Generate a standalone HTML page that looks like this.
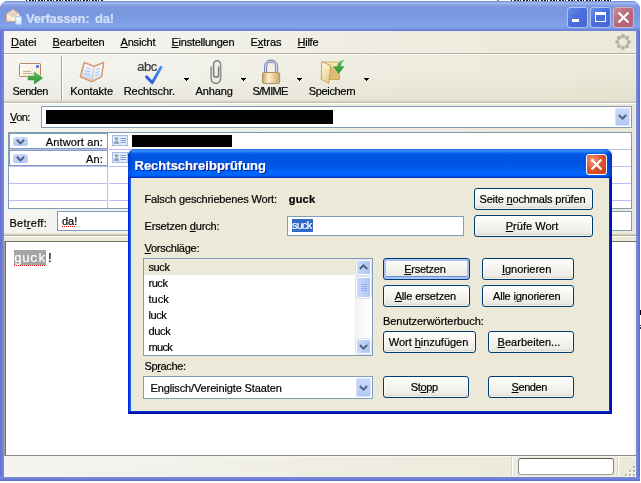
<!DOCTYPE html><html><head><meta charset="utf-8"><title>Verfassen: da!</title><style>
html,body{margin:0;padding:0;background:#fff;}
body{width:641px;height:483px;position:relative;overflow:hidden;font-family:"Liberation Sans",sans-serif;}
.t{position:absolute;white-space:nowrap;font-family:"Liberation Sans",sans-serif;-webkit-text-stroke:0.2px currentColor;}
u{text-decoration:underline;text-underline-offset:1px;text-decoration-thickness:1px;}
div{box-sizing:border-box;}
#root{position:absolute;left:0;top:0;width:641px;height:483px;will-change:transform;}
.btn{position:absolute;border:1px solid #003C74;border-radius:3px;background:linear-gradient(to bottom,#FFFFFF 0%,#F6F5F0 40%,#ECEBE5 85%,#D6D0C5 100%);box-shadow:inset 0 0 0 1px rgba(255,255,255,0.6);}
.btn.def{box-shadow:inset 0 0 0 2px #A9C4F0, inset 0 -2px 0 1px #6A8FE0;}
svg{position:absolute;overflow:visible;}
</style></head><body><div id="root">
<div style="position:absolute;left:26px;top:0px;width:1px;height:1px;background:#1a1a1a;"></div>
<div style="position:absolute;left:29px;top:0px;width:2px;height:1px;background:#1a1a1a;"></div>
<div style="position:absolute;left:32px;top:0px;width:2px;height:1px;background:#1a1a1a;"></div>
<div style="position:absolute;left:35px;top:0px;width:1px;height:1px;background:#1a1a1a;"></div>
<div style="position:absolute;left:38px;top:0px;width:2px;height:1px;background:#1a1a1a;"></div>
<div style="position:absolute;left:41px;top:0px;width:2px;height:1px;background:#1a1a1a;"></div>
<div style="position:absolute;left:44px;top:0px;width:1px;height:1px;background:#1a1a1a;"></div>
<div style="position:absolute;left:47px;top:0px;width:2px;height:1px;background:#1a1a1a;"></div>
<div style="position:absolute;left:50px;top:0px;width:2px;height:1px;background:#1a1a1a;"></div>
<div style="position:absolute;left:53px;top:0px;width:1px;height:1px;background:#1a1a1a;"></div>
<div style="position:absolute;left:56px;top:0px;width:2px;height:1px;background:#1a1a1a;"></div>
<div style="position:absolute;left:59px;top:0px;width:2px;height:1px;background:#1a1a1a;"></div>
<div style="position:absolute;left:62px;top:0px;width:1px;height:1px;background:#1a1a1a;"></div>
<div style="position:absolute;left:65px;top:0px;width:2px;height:1px;background:#1a1a1a;"></div>
<div style="position:absolute;left:68px;top:0px;width:2px;height:1px;background:#1a1a1a;"></div>
<div style="position:absolute;left:71px;top:0px;width:1px;height:1px;background:#1a1a1a;"></div>
<div style="position:absolute;left:74px;top:0px;width:2px;height:1px;background:#1a1a1a;"></div>
<div style="position:absolute;left:77px;top:0px;width:2px;height:1px;background:#1a1a1a;"></div>
<div style="position:absolute;left:80px;top:0px;width:1px;height:1px;background:#1a1a1a;"></div>
<div style="position:absolute;left:83px;top:0px;width:2px;height:1px;background:#1a1a1a;"></div>
<div style="position:absolute;left:86px;top:0px;width:2px;height:1px;background:#1a1a1a;"></div>
<div style="position:absolute;left:89px;top:0px;width:1px;height:1px;background:#1a1a1a;"></div>
<div style="position:absolute;left:92px;top:0px;width:2px;height:1px;background:#1a1a1a;"></div>
<div style="position:absolute;left:95px;top:0px;width:2px;height:1px;background:#1a1a1a;"></div>
<div style="position:absolute;left:98px;top:0px;width:1px;height:1px;background:#1a1a1a;"></div>
<div style="position:absolute;left:101px;top:0px;width:2px;height:1px;background:#1a1a1a;"></div>
<div style="position:absolute;left:497px;top:0px;width:2px;height:1px;background:#888;"></div>
<div style="position:absolute;left:511px;top:0px;width:1px;height:1px;background:#1a1a1a;"></div>
<div style="position:absolute;left:514px;top:0px;width:2px;height:1px;background:#1a1a1a;"></div>
<div style="position:absolute;left:517px;top:0px;width:2px;height:1px;background:#1a1a1a;"></div>
<div style="position:absolute;left:520px;top:0px;width:1px;height:1px;background:#1a1a1a;"></div>
<div style="position:absolute;left:523px;top:0px;width:2px;height:1px;background:#1a1a1a;"></div>
<div style="position:absolute;left:526px;top:0px;width:2px;height:1px;background:#1a1a1a;"></div>
<div style="position:absolute;left:529px;top:0px;width:1px;height:1px;background:#1a1a1a;"></div>
<div style="position:absolute;left:532px;top:0px;width:2px;height:1px;background:#1a1a1a;"></div>
<div style="position:absolute;left:535px;top:0px;width:2px;height:1px;background:#1a1a1a;"></div>
<div style="position:absolute;left:538px;top:0px;width:1px;height:1px;background:#1a1a1a;"></div>
<div style="position:absolute;left:541px;top:0px;width:2px;height:1px;background:#1a1a1a;"></div>
<div style="position:absolute;left:544px;top:0px;width:2px;height:1px;background:#1a1a1a;"></div>
<div style="position:absolute;left:547px;top:0px;width:1px;height:1px;background:#1a1a1a;"></div>
<div style="position:absolute;left:550px;top:0px;width:2px;height:1px;background:#1a1a1a;"></div>
<div style="position:absolute;left:553px;top:0px;width:2px;height:1px;background:#1a1a1a;"></div>
<div style="position:absolute;left:556px;top:0px;width:1px;height:1px;background:#1a1a1a;"></div>
<div style="position:absolute;left:559px;top:0px;width:2px;height:1px;background:#1a1a1a;"></div>
<div style="position:absolute;left:562px;top:0px;width:2px;height:1px;background:#1a1a1a;"></div>
<div style="position:absolute;left:565px;top:0px;width:1px;height:1px;background:#1a1a1a;"></div>
<div style="position:absolute;left:568px;top:0px;width:2px;height:1px;background:#1a1a1a;"></div>
<div style="position:absolute;left:571px;top:0px;width:2px;height:1px;background:#1a1a1a;"></div>
<div style="position:absolute;left:574px;top:0px;width:1px;height:1px;background:#1a1a1a;"></div>
<div style="position:absolute;left:577px;top:0px;width:2px;height:1px;background:#1a1a1a;"></div>
<div style="position:absolute;left:580px;top:0px;width:2px;height:1px;background:#1a1a1a;"></div>
<div style="position:absolute;left:583px;top:0px;width:1px;height:1px;background:#1a1a1a;"></div>
<div style="position:absolute;left:586px;top:0px;width:2px;height:1px;background:#1a1a1a;"></div>
<div style="position:absolute;left:589px;top:0px;width:2px;height:1px;background:#1a1a1a;"></div>
<div style="position:absolute;left:592px;top:0px;width:1px;height:1px;background:#1a1a1a;"></div>
<div style="position:absolute;left:595px;top:0px;width:2px;height:1px;background:#1a1a1a;"></div>
<div style="position:absolute;left:598px;top:0px;width:2px;height:1px;background:#1a1a1a;"></div>
<div style="position:absolute;left:601px;top:0px;width:1px;height:1px;background:#1a1a1a;"></div>
<div style="position:absolute;left:604px;top:0px;width:2px;height:1px;background:#1a1a1a;"></div>
<div style="position:absolute;left:607px;top:0px;width:2px;height:1px;background:#1a1a1a;"></div>
<div style="position:absolute;left:610px;top:0px;width:1px;height:1px;background:#1a1a1a;"></div>
<div style="position:absolute;left:0px;top:1px;width:640px;height:480px;border-radius:8px 8px 0 0;background:#6B7BD6;"></div>
<div style="position:absolute;left:0px;top:1px;width:640px;height:30px;border-radius:8px 8px 0 0;background:linear-gradient(to bottom,#5C7FD9 0,#92ACE8 1px,#9EB7EA 2.5px,#8AA3E4 4px,#7C97DF 6px,#7996DF 12px,#7C9CE4 19px,#80A5E9 25px,#7D9DE6 27px,#738DDF 28px,#6C82D9 29px,#6C82D9 30px);"></div>
<div style="position:absolute;left:0px;top:31px;width:4px;height:449px;background:linear-gradient(to right,#6470D2 0,#6876D4 1px,#7686DC 3px,#7B8DE0 4px);"></div>
<div style="position:absolute;left:636px;top:31px;width:4px;height:449px;background:linear-gradient(to right,#7B8DE0 0,#7686DC 1px,#6876D4 3px,#5E68CC 4px);"></div>
<div style="position:absolute;left:0px;top:477px;width:640px;height:4px;background:linear-gradient(to bottom,#7B8DE0 0,#7484DB 1px,#6876D4 3px,#5E68CC 4px);"></div>
<div style="position:absolute;left:4px;top:31px;width:632px;height:446px;background:#ECE9D8;"></div>
<svg style="left:6px;top:9px" width="16" height="16" viewBox="0 0 16 16">
<defs><linearGradient id="pg" x1="0" y1="0" x2="0" y2="1"><stop offset="0" stop-color="#FFFFFF"/><stop offset="1" stop-color="#D5E3F8"/></linearGradient></defs>
<path d="M0.6 5 L6.9 0.4 L13.6 5 L13.6 12.3 L0.6 12.3 Z" fill="#FFF7EA" stroke="#DDA673" stroke-width="1" stroke-linejoin="round"/>
<path d="M1.6 5.3 L6.9 1.6 L12.6 5.3 L7 8.6 Z" fill="#E3D2C3"/>
<path d="M1.4 11.6 L5.6 8 M12.8 11.6 L8.4 8" stroke="#E6C3A0" stroke-width="0.9"/>
<rect x="9.7" y="7.7" width="5.8" height="7.6" fill="url(#pg)" stroke="#A6C3EE" stroke-width="1"/>
</svg>
<div class="t" style="left:26.00px;top:10.50px;font-size:13px;line-height:16px;color:#D4E0F7;font-weight:bold;letter-spacing:-0.251px;">Verfassen:</div>
<div class="t" style="left:95.00px;top:10.50px;font-size:13px;line-height:16px;color:#D4E0F7;font-weight:bold;letter-spacing:-0.250px;">da!</div>
<div style="position:absolute;left:567px;top:7px;width:21px;height:21px;border:1px solid #B3C3F0;border-radius:3px;background:linear-gradient(135deg,#6A8CE8 0,#4A6FDC 45%,#4468D6 100%);"></div>
<div style="position:absolute;left:572px;top:19px;width:7px;height:3px;background:#fff;"></div>
<div style="position:absolute;left:590px;top:7px;width:21px;height:21px;border:1px solid #B3C3F0;border-radius:3px;background:linear-gradient(135deg,#6A8CE8 0,#4A6FDC 45%,#4468D6 100%);"></div>
<div style="position:absolute;left:595px;top:12px;width:11px;height:10px;border:1px solid #fff;border-top:3px solid #fff;"></div>
<div style="position:absolute;left:613px;top:7px;width:21px;height:21px;border:1px solid #D3B4C6;border-radius:3px;background:linear-gradient(135deg,#C98A98 0,#B9687A 50%,#B0607A 100%);"></div>
<svg style="left:613px;top:7px" width="21" height="21" viewBox="0 0 21 21"><path d="M5.5 5.5 L15.5 15.5 M15.5 5.5 L5.5 15.5" stroke="#fff" stroke-width="2.2" stroke-linecap="butt"/></svg>
<div style="position:absolute;left:4px;top:31px;width:632px;height:22px;background:linear-gradient(to right,#F4F4F1 0,#F2F1EA 30%,#EEECDF 65%,#ECE9D8 100%);"></div>
<div style="position:absolute;left:4px;top:53px;width:632px;height:1px;background:#B3AF9C;"></div>
<div style="position:absolute;left:4px;top:54px;width:632px;height:1px;background:#FFFFFF;"></div>
<div style="position:absolute;left:4px;top:55px;width:632px;height:47px;background:linear-gradient(to right,#F4F4F1 0,#F2F1EA 30%,#EEECDF 65%,#ECE9D8 100%);"></div>
<div style="position:absolute;left:4px;top:54px;width:632px;height:46px;background:linear-gradient(to bottom,rgba(120,110,60,0) 0,rgba(120,110,60,0) 40%,rgba(120,110,60,0.07) 100%);"></div>
<div style="position:absolute;left:4px;top:100px;width:632px;height:1px;background:#E2DFD2;"></div>
<div style="position:absolute;left:4px;top:101px;width:632px;height:1px;background:#D6D3C3;"></div>
<div style="position:absolute;left:4px;top:102px;width:632px;height:1px;background:#C5C1AD;"></div>
<div style="position:absolute;left:4px;top:103px;width:632px;height:1px;background:#FFFFFF;"></div>
<div style="position:absolute;left:4px;top:104px;width:632px;height:131px;background:linear-gradient(to right,#F4F4F1 0,#F2F1EA 30%,#EEECDF 65%,#ECE9D8 100%);"></div>
<div class="t" style="left:11.00px;top:35.19px;font-size:11px;line-height:14px;color:#000;letter-spacing:-0.045px;"><u>D</u>atei</div>
<div class="t" style="left:52.50px;top:35.19px;font-size:11px;line-height:14px;color:#000;letter-spacing:-0.134px;"><u>B</u>earbeiten</div>
<div class="t" style="left:120.50px;top:35.19px;font-size:11px;line-height:14px;color:#000;letter-spacing:-0.179px;"><u>A</u>nsicht</div>
<div class="t" style="left:171.50px;top:35.19px;font-size:11px;line-height:14px;color:#000;letter-spacing:-0.254px;"><u>E</u>instellungen</div>
<div class="t" style="left:250.50px;top:35.19px;font-size:11px;line-height:14px;color:#000;letter-spacing:-0.035px;">E<u>x</u>tras</div>
<div class="t" style="left:297.50px;top:35.19px;font-size:11px;line-height:14px;color:#000;letter-spacing:-0.251px;"><u>H</u>ilfe</div>
<svg style="left:614px;top:33px" width="18" height="18" viewBox="0 0 18 18"><circle cx="14.80" cy="9.00" r="2.1" fill="#B4B2A8"/><circle cx="13.10" cy="13.10" r="2.1" fill="#B4B2A8"/><circle cx="9.00" cy="14.80" r="2.1" fill="#B4B2A8"/><circle cx="4.90" cy="13.10" r="2.1" fill="#B4B2A8"/><circle cx="3.20" cy="9.00" r="2.1" fill="#B4B2A8"/><circle cx="4.90" cy="4.90" r="2.1" fill="#B4B2A8"/><circle cx="9.00" cy="3.20" r="2.1" fill="#B4B2A8"/><circle cx="13.10" cy="4.90" r="2.1" fill="#B4B2A8"/></svg>
<div class="t" style="left:12.50px;top:83.59px;font-size:11px;line-height:14px;color:#000;letter-spacing:-0.405px;">Senden</div>
<div class="t" style="left:70.30px;top:83.59px;font-size:11px;line-height:14px;color:#000;letter-spacing:-0.103px;">Kontakte</div>
<div class="t" style="left:123.75px;top:83.59px;font-size:11px;line-height:14px;color:#000;letter-spacing:-0.079px;">Rechtschr.</div>
<div class="t" style="left:195.60px;top:83.59px;font-size:11px;line-height:14px;color:#000;letter-spacing:-0.145px;">Anhang</div>
<div class="t" style="left:252.50px;top:83.59px;font-size:11px;line-height:14px;color:#000;letter-spacing:-0.643px;">S/MIME</div>
<div class="t" style="left:308.75px;top:83.59px;font-size:11px;line-height:14px;color:#000;letter-spacing:-0.335px;">Speichern</div>
<div style="position:absolute;left:61px;top:56px;width:1px;height:45px;background:#ACA899;"></div>
<div style="position:absolute;left:62px;top:56px;width:1px;height:45px;background:#FFFFFF;"></div>
<div style="position:absolute;left:184px;top:78px;width:5px;height:1px;background:#000;"></div>
<div style="position:absolute;left:185px;top:79px;width:3px;height:1px;background:#000;"></div>
<div style="position:absolute;left:186px;top:80px;width:1px;height:1px;background:#000;"></div>
<div style="position:absolute;left:241px;top:78px;width:5px;height:1px;background:#000;"></div>
<div style="position:absolute;left:242px;top:79px;width:3px;height:1px;background:#000;"></div>
<div style="position:absolute;left:243px;top:80px;width:1px;height:1px;background:#000;"></div>
<div style="position:absolute;left:297px;top:78px;width:5px;height:1px;background:#000;"></div>
<div style="position:absolute;left:298px;top:79px;width:3px;height:1px;background:#000;"></div>
<div style="position:absolute;left:299px;top:80px;width:1px;height:1px;background:#000;"></div>
<div style="position:absolute;left:364px;top:78px;width:5px;height:1px;background:#000;"></div>
<div style="position:absolute;left:365px;top:79px;width:3px;height:1px;background:#000;"></div>
<div style="position:absolute;left:366px;top:80px;width:1px;height:1px;background:#000;"></div>
<svg style="left:0;top:54px" width="641" height="50" viewBox="0 54 641 50">
<defs>
<linearGradient id="env" x1="0" y1="0" x2="1" y2="1"><stop offset="0" stop-color="#FFFFFF"/><stop offset="1" stop-color="#F3E2CB"/></linearGradient>
<linearGradient id="grn" x1="0" y1="0" x2="0" y2="1"><stop offset="0" stop-color="#63C05E"/><stop offset="1" stop-color="#2E8F2E"/></linearGradient>
<linearGradient id="pgL" x1="0" y1="0" x2="0" y2="1"><stop offset="0" stop-color="#FFFFFF"/><stop offset="1" stop-color="#BFD8F8"/></linearGradient>
<linearGradient id="pgR" x1="0" y1="0" x2="0" y2="1"><stop offset="0" stop-color="#FFFFFF"/><stop offset="1" stop-color="#D6E6FB"/></linearGradient>
<linearGradient id="chk" x1="0" y1="1" x2="1" y2="0"><stop offset="0" stop-color="#2B55D8"/><stop offset="1" stop-color="#4A96F4"/></linearGradient>
<linearGradient id="gold" x1="0" y1="0" x2="1" y2="0"><stop offset="0" stop-color="#C6A36A"/><stop offset="0.35" stop-color="#FBF0CF"/><stop offset="0.7" stop-color="#E2C995"/><stop offset="1" stop-color="#C9A66C"/></linearGradient>
<linearGradient id="fold" x1="0" y1="0" x2="0.6" y2="1"><stop offset="0" stop-color="#FFFCEE"/><stop offset="1" stop-color="#EBCD88"/></linearGradient><linearGradient id="foldb" x1="0" y1="0" x2="0" y2="1"><stop offset="0" stop-color="#F6E7B4"/><stop offset="1" stop-color="#E2C47C"/></linearGradient>
</defs>
<!-- send -->
<rect x="19.5" y="63.5" width="21" height="13" rx="0.8" fill="url(#env)" stroke="#B8865F" stroke-width="1"/>
<rect x="36" y="65" width="3" height="3" fill="#5C80F0"/>
<path d="M23 71.5 H31 M23 73.5 H33" stroke="#C8B29A" stroke-width="1"/>
<path d="M28 76 H34.3 V72 L42.8 78 L34.3 84 V80 H28 Z" fill="url(#grn)" stroke="#FFFFFF" stroke-width="1.2" paint-order="stroke"/>
<path d="M28 76 H34.3 V72 L42.8 78 L34.3 84 V80 H28 Z" fill="none" stroke="#2F8C2F" stroke-width="0.5"/>
<!-- contacts book -->
<path d="M84 62.2 L94.2 66.1 L103.9 62.2 L101.8 76.8 L91.8 81.9 L80 77 Z" fill="#E9B58C" stroke="#D2946A" stroke-width="1" stroke-linejoin="round"/>
<path d="M85 63.8 L93.6 67.3 L92 80.2 L81.8 76 Z" fill="url(#pgL)"/>
<path d="M94.6 67.3 L102.6 63.9 L100.8 75.9 L92.6 80.2 Z" fill="url(#pgR)"/>
<path d="M86 67.5 L90.5 69 M85.2 70.5 L90 72 M84.5 73.5 L89.5 75 M95.5 70 L100 68.3 M95.2 73 L99.6 71.3 M94.8 76 L99.2 74.3" stroke="#A4C2EE" stroke-width="1"/>
<!-- abc check -->
<path d="M146.6 76.9 L152.3 82.6 L161 67.2" fill="none" stroke="url(#chk)" stroke-width="2.9" stroke-linecap="round" stroke-linejoin="round"/>
<!-- paperclip -->
<path d="M211.2 67 V78.6 A4.7 4.7 0 0 0 220.6 78.6 V64.2 A3.5 3.5 0 0 0 213.6 64.2 V74.8 A2.5 2.5 0 0 0 218.6 74.8 V67" fill="none" stroke="#7C7C7C" stroke-width="1.5" stroke-linecap="round"/>
<path d="M211.9 67 V78.6 A4 4 0 0 0 219.9 78.6 V64.2" fill="none" stroke="#D0D0D0" stroke-width="0.6"/>
<!-- lock -->
<path d="M265.6 72.5 V66.8 A5.5 5.6 0 0 1 276.6 66.8 V72.5" fill="none" stroke="#7D86B4" stroke-width="3.2"/>
<path d="M265.6 72.5 V66.8 A5.5 5.6 0 0 1 276.6 66.8 V72.5" fill="none" stroke="#D5DCF4" stroke-width="1.1"/>
<rect x="262.5" y="72.5" width="17.2" height="11" rx="1.6" fill="url(#gold)" stroke="#B58F58" stroke-width="1"/>
<!-- folder + save arrow -->
<path d="M322 62 H339.5 V79.5 H322 Z" fill="url(#foldb)" stroke="#CDAA62" stroke-width="1"/>
<path d="M331 67 H339 V79 H329.5 Z" fill="#DDBD72"/>
<path d="M321.7 61.6 L330.8 65.6 L328.8 83.4 L321.2 79.3 Z" fill="url(#fold)" stroke="#C8A35A" stroke-width="1" stroke-linejoin="round"/>
<path d="M332.6 66.2 L337.2 66.2 C337.4 62.5 340.5 60.3 345.2 59.8 C342.2 61.8 341.3 63.6 341.2 66.2 L344.8 66.2 L338.5 74 Z" fill="url(#grn)" stroke="#FFFFFF" stroke-width="1" paint-order="stroke"/>
</svg>
<div class="t" style="left:137.3px;top:59.3px;font-size:13px;line-height:16px;color:#3A3A3A;letter-spacing:-0.45px">abc</div>
<div class="t" style="left:10.00px;top:109.79px;font-size:11px;line-height:14px;color:#000;letter-spacing:-0.541px;"><u>V</u>on:</div>
<div style="position:absolute;left:41px;top:106px;width:591px;height:22px;background:#fff;border:1px solid #7F9DB9;"></div>
<div style="position:absolute;left:46px;top:110px;width:287px;height:14px;background:#000;"></div>
<div style="position:absolute;left:615px;top:108px;width:15px;height:18px;border-radius:2px;background:linear-gradient(to bottom,#CBD9FB 0,#BFD0F8 50%,#B2C6F3 100%);box-shadow:inset 0 0 0 1px #D6E1FB;"></div>
<svg style="left:618.0px;top:114.0px" width="9" height="6" viewBox="0 0 9 6"><path d="M0.8 1 L4.5 4.6 L8.2 1" fill="none" stroke="#4D6185" stroke-width="2"/></svg>
<div style="position:absolute;left:8px;top:132px;width:624px;height:77px;background:#fff;border:1px solid #7F9DB9;"></div>
<div style="position:absolute;left:9px;top:149px;width:98px;height:1px;background:#BCBCF4;"></div>
<div style="position:absolute;left:109px;top:149px;width:522px;height:1px;background:#BCBCF4;"></div>
<div style="position:absolute;left:9px;top:166px;width:98px;height:1px;background:#BCBCF4;"></div>
<div style="position:absolute;left:109px;top:166px;width:522px;height:1px;background:#BCBCF4;"></div>
<div style="position:absolute;left:9px;top:183px;width:98px;height:1px;background:#BCBCF4;"></div>
<div style="position:absolute;left:109px;top:183px;width:522px;height:1px;background:#BCBCF4;"></div>
<div style="position:absolute;left:9px;top:200px;width:98px;height:1px;background:#BCBCF4;"></div>
<div style="position:absolute;left:109px;top:200px;width:522px;height:1px;background:#BCBCF4;"></div>
<div style="position:absolute;left:107px;top:133px;width:1px;height:75px;background:#BCBCF4;"></div>
<div style="position:absolute;left:9px;top:133px;width:99px;height:16px;background:#fff;border:1px solid #7F9DB9;"></div>
<div style="position:absolute;left:13px;top:137px;width:15px;height:9px;border-radius:2px;background:linear-gradient(to bottom,#CBD9FB 0,#B4C8F4 100%);"></div>
<svg style="left:16px;top:138.5px" width="9" height="6" viewBox="0 0 9 6"><path d="M0.8 0.8 L4.5 4.4 L8.2 0.8" fill="none" stroke="#4D6185" stroke-width="2.1"/></svg>
<div class="t" style="left:45.77px;top:134.69px;font-size:11px;line-height:14px;color:#000;letter-spacing:0.139px;">Antwort an:</div>
<svg style="left:112px;top:135px" width="16" height="11" viewBox="0 0 16 11">
<rect x="0.5" y="0.5" width="15" height="10" fill="#E2ECFB" stroke="#A3BDE8" stroke-width="1"/>
<circle cx="4.5" cy="3.8" r="1.8" fill="#9AA6B8"/><path d="M1.8 9 Q1.8 5.8 4.5 5.8 Q7.2 5.8 7.2 9 Z" fill="#9AA6B8"/>
<path d="M8.5 3.5 H14 M8.5 5.5 H14 M8.5 7.5 H14" stroke="#7FA2DC" stroke-width="1"/></svg>
<div style="position:absolute;left:9px;top:150px;width:99px;height:16px;background:#fff;border:1px solid #7F9DB9;"></div>
<div style="position:absolute;left:13px;top:154px;width:15px;height:9px;border-radius:2px;background:linear-gradient(to bottom,#CBD9FB 0,#B4C8F4 100%);"></div>
<svg style="left:16px;top:155.5px" width="9" height="6" viewBox="0 0 9 6"><path d="M0.8 0.8 L4.5 4.4 L8.2 0.8" fill="none" stroke="#4D6185" stroke-width="2.1"/></svg>
<div class="t" style="left:85.88px;top:151.69px;font-size:11px;line-height:14px;color:#000;letter-spacing:0.206px;">An:</div>
<svg style="left:112px;top:152px" width="16" height="11" viewBox="0 0 16 11">
<rect x="0.5" y="0.5" width="15" height="10" fill="#E2ECFB" stroke="#A3BDE8" stroke-width="1"/>
<circle cx="4.5" cy="3.8" r="1.8" fill="#9AA6B8"/><path d="M1.8 9 Q1.8 5.8 4.5 5.8 Q7.2 5.8 7.2 9 Z" fill="#9AA6B8"/>
<path d="M8.5 3.5 H14 M8.5 5.5 H14 M8.5 7.5 H14" stroke="#7FA2DC" stroke-width="1"/></svg>
<div style="position:absolute;left:132px;top:135px;width:100px;height:12px;background:#000;"></div>
<div class="t" style="left:9.50px;top:215.89px;font-size:11px;line-height:14px;color:#000;letter-spacing:0.277px;">Bet<u>r</u>eff:</div>
<div style="position:absolute;left:57px;top:211px;width:575px;height:20px;background:#fff;border:1px solid #7F9DB9;"></div>
<div class="t" style="left:62.00px;top:214.19px;font-size:11px;line-height:14px;color:#000;letter-spacing:-0.045px;">da!</div>
<div style="position:absolute;left:62px;top:226px;width:13px;height:1px;background:repeating-linear-gradient(to right,#F00 0,#F00 1px,transparent 1px,transparent 2px);"></div>
<div style="position:absolute;left:4px;top:233px;width:632px;height:1px;background:#E6E3D4;"></div>
<div style="position:absolute;left:4px;top:234px;width:632px;height:1px;background:#D5D1BE;"></div>
<div style="position:absolute;left:4px;top:235px;width:632px;height:1px;background:#B5B09A;"></div>
<div style="position:absolute;left:4px;top:236px;width:632px;height:1px;background:#FFFFFF;"></div>
<div style="position:absolute;left:4px;top:237px;width:632px;height:4px;background:#ECE9D8;"></div>
<div style="position:absolute;left:4px;top:241px;width:632px;height:214px;background:#fff;border-left:1px solid #ACA899;border-top:1px solid #716F64;"></div>
<div style="position:absolute;left:5px;top:242px;width:1px;height:213px;background:#716F64;"></div>
<div style="position:absolute;left:634px;top:242px;width:2px;height:213px;background:#F4F2E8;"></div>
<div style="position:absolute;left:14px;top:250px;width:32px;height:15px;background:#A5A5A5;"></div>
<div class="t" style="left:14px;top:252px;font-family:'Liberation Mono',monospace;font-size:13px;line-height:14px;letter-spacing:0.2px;color:#fff">guck<span style="color:#000">!</span></div>
<div style="position:absolute;left:14px;top:265px;width:32px;height:1px;background:repeating-linear-gradient(to right,#F00 0,#F00 1px,transparent 1px,transparent 2px);"></div>
<div style="position:absolute;left:4px;top:455px;width:632px;height:1px;background:#8E8C7E;"></div>
<div style="position:absolute;left:4px;top:456px;width:632px;height:1px;background:#F6F5EE;"></div>
<div style="position:absolute;left:4px;top:457px;width:632px;height:20px;background:linear-gradient(to right,#F4F4F1 0,#F2F1EA 30%,#EEECDF 65%,#ECE9D8 100%);"></div>
<div style="position:absolute;left:518px;top:458px;width:96px;height:17px;background:#fff;border:1px solid #8A8A8A;border-top-color:#5E5E5E;border-bottom-color:#A0A0A0;border-radius:3px;"></div>
<div style="position:absolute;left:511px;top:457px;width:1px;height:19px;background:#DAD6C6;"></div>
<div style="position:absolute;left:512px;top:457px;width:1px;height:19px;background:#FFFFFF;"></div>
<div style="position:absolute;left:618px;top:457px;width:1px;height:19px;background:#FFFFFF;"></div>
<div style="position:absolute;left:617px;top:457px;width:1px;height:19px;background:#DAD6C6;"></div>
<div style="position:absolute;left:634px;top:467px;width:2px;height:2px;background:#fff;"></div>
<div style="position:absolute;left:633px;top:466px;width:2px;height:2px;background:#B8B4A2;"></div>
<div style="position:absolute;left:630px;top:471px;width:2px;height:2px;background:#fff;"></div>
<div style="position:absolute;left:629px;top:470px;width:2px;height:2px;background:#B8B4A2;"></div>
<div style="position:absolute;left:634px;top:471px;width:2px;height:2px;background:#fff;"></div>
<div style="position:absolute;left:633px;top:470px;width:2px;height:2px;background:#B8B4A2;"></div>
<div style="position:absolute;left:626px;top:475px;width:2px;height:2px;background:#fff;"></div>
<div style="position:absolute;left:625px;top:474px;width:2px;height:2px;background:#B8B4A2;"></div>
<div style="position:absolute;left:630px;top:475px;width:2px;height:2px;background:#fff;"></div>
<div style="position:absolute;left:629px;top:474px;width:2px;height:2px;background:#B8B4A2;"></div>
<div style="position:absolute;left:634px;top:475px;width:2px;height:2px;background:#fff;"></div>
<div style="position:absolute;left:633px;top:474px;width:2px;height:2px;background:#B8B4A2;"></div>
<div style="position:absolute;left:128px;top:149px;width:484px;height:265px;border-radius:7px 7px 0 0;background:#0831D9;"></div>
<div style="position:absolute;left:128px;top:149px;width:484px;height:29px;border-radius:7px 7px 0 0;background:linear-gradient(to bottom,#0B5CE5 0,#2C84FB 1px,#3B8FFF 2px,#2079F5 3px,#0860EC 4.5px,#0356E4 6px,#0054E3 14px,#005AEE 19px,#0065FC 23px,#0066FF 26px,#005CF4 27px,#0038C8 28px,#0030C0 29px);"></div>
<div style="position:absolute;left:131px;top:178px;width:478px;height:233px;background:#ECE9D8;"></div>
<div style="position:absolute;left:128px;top:178px;width:3px;height:236px;background:linear-gradient(to right,#0019CF 0,#0831D9 1px,#166AEE 2px,#0855DD 3px);"></div>
<div style="position:absolute;left:609px;top:178px;width:3px;height:236px;background:linear-gradient(to right,#0A32D0 0,#0A32D0 1px,#0016B8 1px,#0016B8 2px,#000F9A 2px,#000F9A 3px);"></div>
<div style="position:absolute;left:128px;top:411px;width:484px;height:3px;background:linear-gradient(to bottom,#0A32D0 0,#0A32D0 1px,#0016B8 1px,#0016B8 2px,#000F9A 2px,#000F9A 3px);"></div>
<div style="position:absolute;left:604px;top:150px;width:8px;height:28px;border-radius:0 7px 0 0;background:linear-gradient(to right,rgba(0,30,160,0) 0,rgba(0,30,160,0.55) 100%);"></div>
<div style="position:absolute;left:128px;top:150px;width:5px;height:28px;border-radius:7px 0 0 0;background:linear-gradient(to left,rgba(0,30,160,0) 0,rgba(0,30,160,0.4) 100%);"></div>
<div class="t" style="left:134.50px;top:157.50px;font-size:13px;line-height:16px;color:#fff;font-weight:bold;letter-spacing:0.003px;text-shadow:1px 1px 0 #0A1883;">Rechtschreibprüfung</div>
<div style="position:absolute;left:586px;top:154px;width:21px;height:21px;border:1px solid #fff;border-radius:3px;background:radial-gradient(circle at 30% 30%,#F0A08A 0,#E0532F 45%,#C83A1A 100%);"></div>
<svg style="left:586px;top:154px" width="21" height="21" viewBox="0 0 21 21"><path d="M5.5 5.5 L15.5 15.5 M15.5 5.5 L5.5 15.5" stroke="#fff" stroke-width="2.3"/></svg>
<div class="t" style="left:144.50px;top:192.19px;font-size:11px;line-height:14px;color:#000;letter-spacing:-0.145px;">Falsch geschriebenes Wort:</div>
<div class="t" style="left:288.75px;top:192.19px;font-size:11px;line-height:14px;color:#000;font-weight:bold;letter-spacing:0.193px;">guck</div>
<div class="t" style="left:144.50px;top:219.19px;font-size:11px;line-height:14px;color:#000;letter-spacing:-0.145px;">Ersetzen <u>d</u>urch:</div>
<div class="t" style="left:144.50px;top:241.19px;font-size:11px;line-height:14px;color:#000;letter-spacing:-0.248px;"><u>V</u>orschläge:</div>
<div class="t" style="left:144.50px;top:358.99px;font-size:11px;line-height:14px;color:#000;letter-spacing:-0.346px;">Sp<u>r</u>ache:</div>
<div class="t" style="left:383.00px;top:314.19px;font-size:11px;line-height:14px;color:#000;letter-spacing:-0.041px;">Benutzerwörterbuch:</div>
<div style="position:absolute;left:287px;top:216px;width:177px;height:20px;background:#fff;border:1px solid #7F9DB9;"></div>
<div style="position:absolute;left:292px;top:219px;width:21px;height:13px;background:#316AC5;"></div>
<div class="t" style="left:292.00px;top:218.19px;font-size:11px;line-height:14px;color:#fff;letter-spacing:-0.772px;">suck</div>
<div style="position:absolute;left:143px;top:258px;width:230px;height:98px;background:#fff;border:1px solid #7F9DB9;"></div>
<div style="position:absolute;left:144px;top:259px;width:211px;height:16px;background:#ECE9D8;"></div>
<div class="t" style="left:148.50px;top:260.19px;font-size:11px;line-height:14px;color:#000;letter-spacing:-0.406px;">suck</div>
<div class="t" style="left:148.50px;top:276.19px;font-size:11px;line-height:14px;color:#000;letter-spacing:-0.460px;">ruck</div>
<div class="t" style="left:148.50px;top:292.19px;font-size:11px;line-height:14px;color:#000;letter-spacing:0.009px;">tuck</div>
<div class="t" style="left:148.50px;top:308.19px;font-size:11px;line-height:14px;color:#000;letter-spacing:-0.454px;">luck</div>
<div class="t" style="left:148.50px;top:324.19px;font-size:11px;line-height:14px;color:#000;letter-spacing:-0.345px;">duck</div>
<div class="t" style="left:148.50px;top:340.19px;font-size:11px;line-height:14px;color:#000;letter-spacing:-0.693px;">muck</div>
<div style="position:absolute;left:355px;top:259px;width:17px;height:96px;background:linear-gradient(to right,#F3F1EC 0,#FDFDFB 60%,#FEFEFB 100%);"></div>
<div style="position:absolute;left:356px;top:260px;width:15px;height:15px;border-radius:2px;border:1px solid #fff;background:linear-gradient(to right,#C9D8FB 0,#BCCDF6 60%,#AFC2F0 100%);box-shadow:0 0 0 0.5px #B8C8EE;"></div>
<svg style="left:359.0px;top:264.0px" width="9" height="6" viewBox="0 0 9 6"><path d="M0.8 5 L4.5 1.4 L8.2 5" fill="none" stroke="#4D6185" stroke-width="2"/></svg>
<div style="position:absolute;left:356px;top:277px;width:15px;height:21px;border-radius:2px;border:1px solid #fff;background:linear-gradient(to right,#C9D8FB 0,#BCCDF6 60%,#AFC2F0 100%);box-shadow:0 0 0 0.5px #B8C8EE;"></div>
<div style="position:absolute;left:360.5px;top:283.5px;width:6px;height:1px;background:#8CB0F8;"></div>
<div style="position:absolute;left:360.5px;top:285.5px;width:6px;height:1px;background:#8CB0F8;"></div>
<div style="position:absolute;left:360.5px;top:287.5px;width:6px;height:1px;background:#8CB0F8;"></div>
<div style="position:absolute;left:360.5px;top:289.5px;width:6px;height:1px;background:#8CB0F8;"></div>
<div style="position:absolute;left:356px;top:339px;width:15px;height:15px;border-radius:2px;border:1px solid #fff;background:linear-gradient(to right,#C9D8FB 0,#BCCDF6 60%,#AFC2F0 100%);box-shadow:0 0 0 0.5px #B8C8EE;"></div>
<svg style="left:359.0px;top:343.5px" width="9" height="6" viewBox="0 0 9 6"><path d="M0.8 1 L4.5 4.6 L8.2 1" fill="none" stroke="#4D6185" stroke-width="2"/></svg>
<div style="position:absolute;left:143px;top:376px;width:230px;height:23px;background:#fff;border:1px solid #7F9DB9;"></div>
<div class="t" style="left:150.50px;top:381.19px;font-size:11px;line-height:14px;color:#000;letter-spacing:-0.126px;">Englisch/Vereinigte Staaten</div>
<div style="position:absolute;left:356px;top:378px;width:15px;height:19px;border-radius:2px;background:linear-gradient(to bottom,#CBD9FB 0,#BFD0F8 50%,#B2C6F3 100%);box-shadow:inset 0 0 0 1px #D6E1FB;"></div>
<svg style="left:359.0px;top:384.5px" width="9" height="6" viewBox="0 0 9 6"><path d="M0.8 1 L4.5 4.6 L8.2 1" fill="none" stroke="#4D6185" stroke-width="2"/></svg>
<div class="btn" style="left:474px;top:188px;width:119px;height:22px"></div>
<div class="t" style="left:479.50px;top:192.19px;font-size:11px;line-height:14px;color:#000;letter-spacing:-0.172px;">Seite <u>n</u>ochmals prüfen</div>
<div class="btn" style="left:474px;top:215px;width:119px;height:22px"></div>
<div class="t" style="left:505.75px;top:219.19px;font-size:11px;line-height:14px;color:#000;letter-spacing:0.015px;"><u>P</u>rüfe Wort</div>
<div class="btn def" style="left:383px;top:258px;width:87px;height:22px"></div>
<div class="t" style="left:404.20px;top:262.19px;font-size:11px;line-height:14px;color:#000;letter-spacing:-0.258px;"><u>E</u>rsetzen</div>
<div class="btn" style="left:482px;top:258px;width:92px;height:22px"></div>
<div class="t" style="left:502.00px;top:262.19px;font-size:11px;line-height:14px;color:#000;letter-spacing:-0.031px;"><u>I</u>gnorieren</div>
<div class="btn" style="left:383px;top:285px;width:87px;height:22px"></div>
<div class="t" style="left:394.70px;top:289.19px;font-size:11px;line-height:14px;color:#000;letter-spacing:-0.190px;"><u>A</u>lle ersetzen</div>
<div class="btn" style="left:482px;top:285px;width:92px;height:22px"></div>
<div class="t" style="left:493.00px;top:289.19px;font-size:11px;line-height:14px;color:#000;letter-spacing:-0.201px;">Alle i<u>g</u>norieren</div>
<div class="btn" style="left:383px;top:331px;width:93px;height:22px"></div>
<div class="t" style="left:388.75px;top:335.19px;font-size:11px;line-height:14px;color:#000;letter-spacing:-0.028px;">Wort <u>h</u>inzufügen</div>
<div class="btn" style="left:488px;top:331px;width:86px;height:22px"></div>
<div class="t" style="left:497.50px;top:335.19px;font-size:11px;line-height:14px;color:#000;letter-spacing:0.036px;"><u>B</u>earbeiten...</div>
<div class="btn" style="left:383px;top:376px;width:86px;height:22px"></div>
<div class="t" style="left:410.70px;top:380.19px;font-size:11px;line-height:14px;color:#000;letter-spacing:-0.311px;">St<u>o</u>pp</div>
<div class="btn" style="left:488px;top:376px;width:86px;height:22px"></div>
<div class="t" style="left:511.60px;top:380.19px;font-size:11px;line-height:14px;color:#000;letter-spacing:-0.445px;"><u>S</u>enden</div>
<div style="position:absolute;left:640px;top:310px;width:1px;height:5px;background:#000;"></div>
<div style="position:absolute;left:640px;top:325px;width:1px;height:1px;background:#333;"></div>
<div style="position:absolute;left:640px;top:327px;width:1px;height:2px;background:#333;"></div>
</div></body></html>
